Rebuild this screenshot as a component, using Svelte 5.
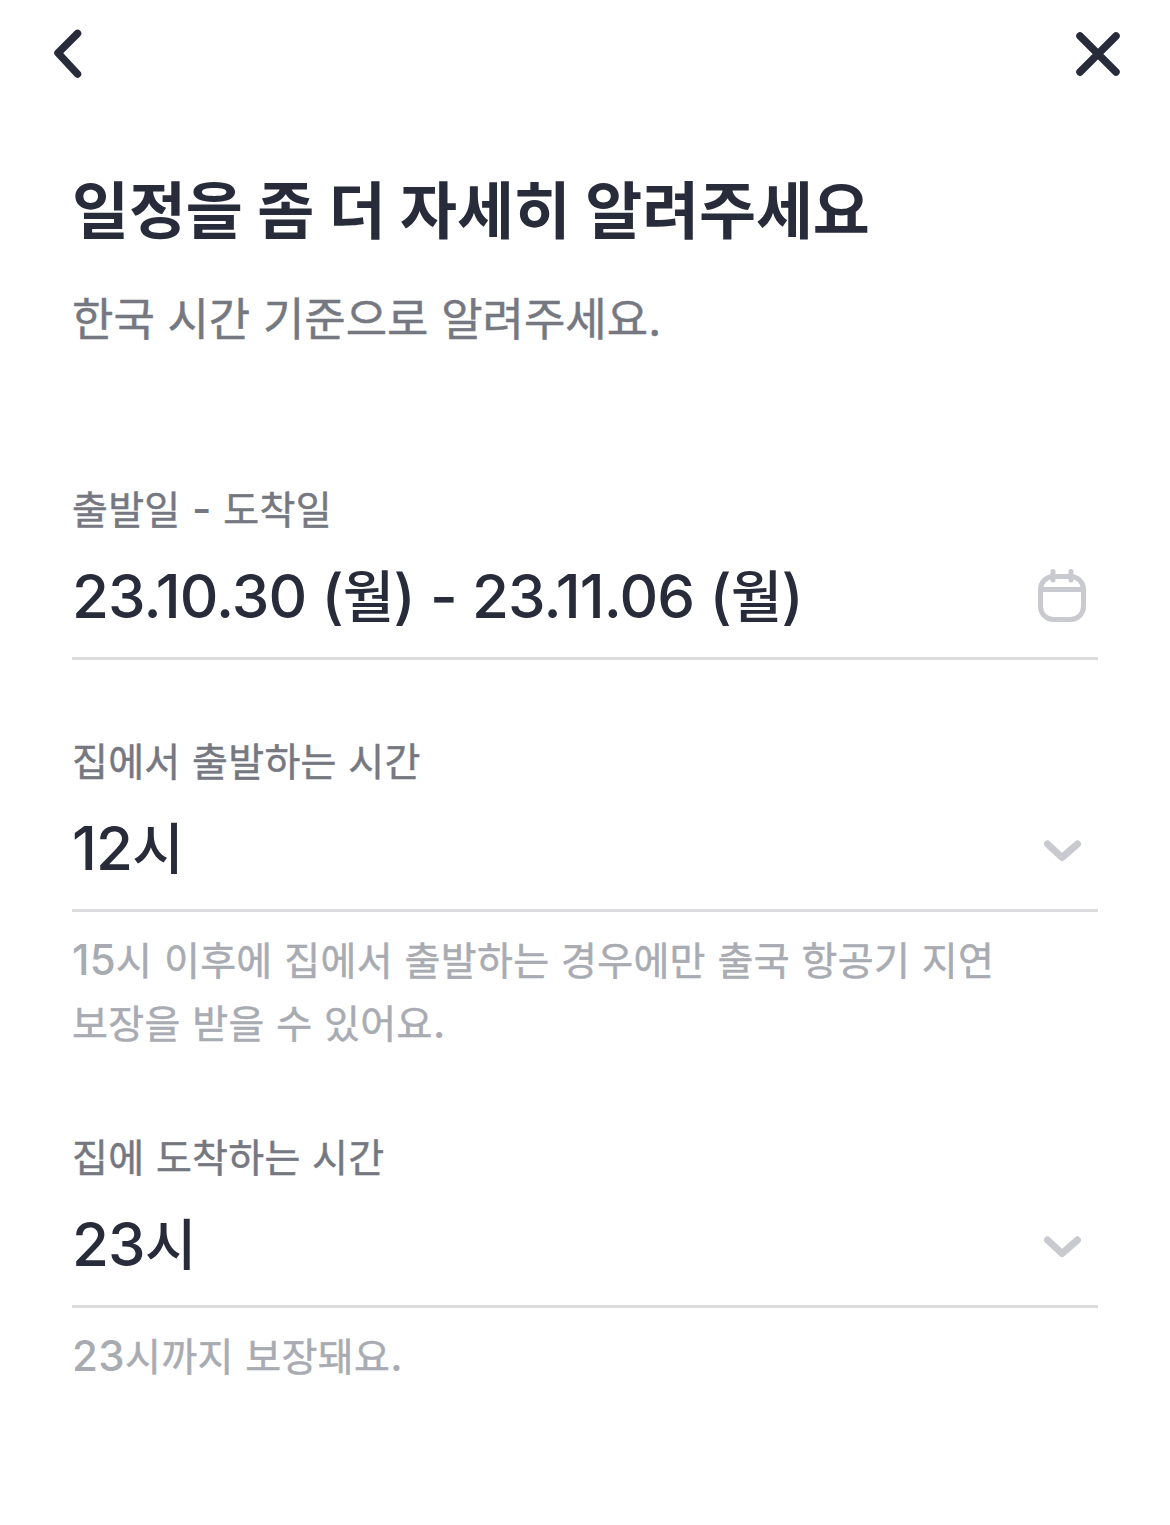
<script>
    const fields = [
        {
            label: '출발일 - 도착일',
            value: '23.10.30 (월) - 23.11.06 (월)',
            icon: 'calendar',
            help: []
        },
        {
            label: '집에서 출발하는 시간',
            value: '12시',
            icon: 'chevron',
            help: ['15시 이후에 집에서 출발하는 경우에만 출국 항공기 지연', '보장을 받을 수 있어요.']
        },
        {
            label: '집에 도착하는 시간',
            value: '23시',
            icon: 'chevron',
            help: ['23시까지 보장돼요.']
        }
    ];

    // Hangul is set a little smaller than the digits around it
    function split(text) {
        return text.split(/([가-힣]+)/).filter(Boolean);
    }

    function isHangul(part) {
        return /[가-힣]/.test(part);
    }
</script>

{#snippet mixed(text)}{#each split(text) as part}<span class:ko={isHangul(part)}>{part}</span>{/each}{/snippet}

<div class="screen">
    <header>
        <button aria-label="뒤로">
            <svg width="48" height="60" viewBox="0 0 48 60">
                <path d="M41.5 9.5 L22 29 L41.5 50" />
            </svg>
        </button>
        <button aria-label="닫기">
            <svg width="60" height="60" viewBox="0 0 60 60">
                <path d="M12 12 L48 48 M48 12 L12 48" />
            </svg>
        </button>
    </header>

    <main>
        <h1>일정을 좀 더 자세히 알려주세요</h1>
        <p class="subtitle">한국 시간 기준으로 알려주세요.</p>

        {#each fields as field}
            <section>
                <div class="label">{@render mixed(field.label)}</div>
                <div class="control">
                    <div class="value">{@render mixed(field.value)}</div>
                    {#if field.icon === 'calendar'}
                        <svg width="72" height="72" viewBox="0 0 72 72">
                            <rect x="14.5" y="14.5" width="43" height="43" rx="13" />
                            <path d="M15 27.5 H57 M27 9.5 V18 M45 9.5 V18" />
                        </svg>
                    {:else}
                        <svg width="72" height="72" viewBox="0 0 72 72">
                            <path class="chevron" d="M21.5 30 L36 43.5 L51.5 30" />
                        </svg>
                    {/if}
                </div>
                {#if field.help.length}
                    <div class="help">
                        {#each field.help as line}
                            <div>{@render mixed(line)}</div>
                        {/each}
                    </div>
                {/if}
            </section>
        {/each}
    </main>
</div>

<style>
    :global(body) {
        background: #ffffff;
    }

    .screen {
        height: 1525px;
        box-sizing: border-box;
        overflow: hidden;
        font-family: Inter, 'Noto Sans CJK KR', sans-serif;
        color: #272b3a;
        white-space: nowrap;
    }

    header {
        display: flex;
        justify-content: space-between;
        padding: 24px 42px 0 36px;
        height: 60px;
    }

    button {
        border: 0;
        padding: 0;
        height: 60px;
        background: none;
    }

    svg {
        display: block;
        fill: none;
        stroke: #c9cad0;
        stroke-width: 5;
        stroke-linecap: round;
        stroke-linejoin: round;
    }

    button svg {
        stroke: #272b3a;
        stroke-width: 7.5;
    }

    .chevron {
        stroke-width: 7;
    }

    main {
        padding: 83px 72px 0;
    }

    h1 {
        margin: 0;
        font-size: 62px;
        line-height: 90px;
        font-weight: 700;
        letter-spacing: -0.15px;
    }

    .subtitle {
        margin: 30px 0 127px;
        font-size: 45px;
        line-height: 66px;
        font-weight: 400;
        color: #767881;
        -webkit-text-stroke: 0.5px #767881;
    }

    section {
        margin-bottom: 72px;
    }

    .label,
    .help {
        font-size: 42px;
        font-weight: 500;
        letter-spacing: 0.3px;
    }

    .ko {
        line-height: 1;
    }

    .label .ko,
    .help .ko {
        font-size: 39px;
        font-weight: 400;
        -webkit-text-stroke: 0.5px currentColor;
    }

    .label {
        height: 60px;
        line-height: 58px;
        color: #767881;
    }

    .control {
        display: flex;
        align-items: center;
        justify-content: space-between;
        height: 115px;
        padding-bottom: 2px;
        border-bottom: 3px solid #dcdcde;
    }

    .value {
        padding-bottom: 3px;
        font-size: 60px;
        font-weight: 500;
        line-height: 84px;
        letter-spacing: -0.85px;
    }

    .value .ko {
        position: relative;
        top: -1px;
        font-size: 56px;
    }

    .help {
        padding-top: 16px;
        margin-bottom: 74px;
        line-height: 63px;
        letter-spacing: 0.35px;
        color: #a9abb2;
    }
</style>
